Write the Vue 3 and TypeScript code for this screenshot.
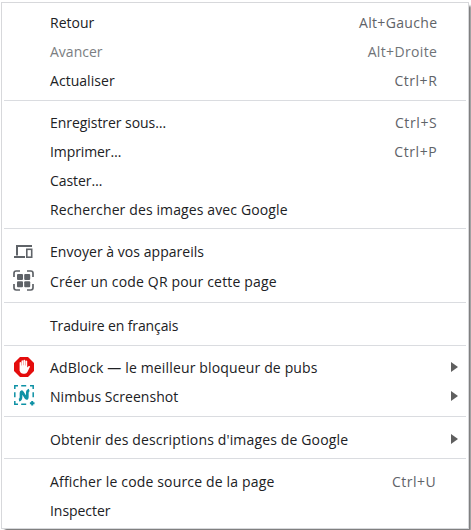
<script setup lang="ts">
interface Item {
  label: string
  spacing: number
  keys?: string
  keysSpacing?: number
  icon?: 'devices' | 'qr' | 'adblock' | 'nimbus'
  disabled?: boolean
  submenu?: boolean
}

const sections: { name: string; items: Item[] }[] = [
  {
    name: 'navigation',
    items: [
      { label: 'Retour', spacing: 0, keys: 'Alt+Gauche', keysSpacing: 0.32 },
      { label: 'Avancer', spacing: 0, keys: 'Alt+Droite', keysSpacing: 0.36, disabled: true },
      { label: 'Actualiser', spacing: 0.04, keys: 'Ctrl+R', keysSpacing: 0.52 },
    ],
  },
  {
    name: 'output',
    items: [
      { label: 'Enregistrer sous…', spacing: -0.05, keys: 'Ctrl+S', keysSpacing: 0.6 },
      { label: 'Imprimer…', spacing: -0.1, keys: 'Ctrl+P', keysSpacing: 0.6 },
      { label: 'Caster…', spacing: -0.05 },
      { label: 'Rechercher des images avec Google', spacing: 0.12 },
    ],
  },
  {
    name: 'share',
    items: [
      { label: 'Envoyer à vos appareils', spacing: 0.04, icon: 'devices' },
      { label: 'Créer un code QR pour cette page', spacing: 0.16, icon: 'qr' },
    ],
  },
  { name: 'translate', items: [{ label: 'Traduire en français', spacing: -0.12 }] },
  {
    name: 'extensions',
    items: [
      { label: 'AdBlock — le meilleur bloqueur de pubs', spacing: 0.15, icon: 'adblock', submenu: true },
      { label: 'Nimbus Screenshot', spacing: 0.04, icon: 'nimbus', submenu: true },
    ],
  },
  {
    name: 'descriptions',
    items: [{ label: "Obtenir des descriptions d'images de Google", spacing: 0.15, submenu: true }],
  },
  {
    name: 'developer',
    items: [
      { label: 'Afficher le code source de la page', spacing: 0.16, keys: 'Ctrl+U', keysSpacing: 0.5 },
      { label: 'Inspecter', spacing: -0.05 },
    ],
  },
]
</script>

<template>
  <div class="screen">
    <div class="menu" role="menu">
      <div v-for="section in sections" :key="section.name" class="section" :class="section.name">
        <div
          v-for="item in section.items"
          :key="item.label"
          class="item"
          :class="{ disabled: item.disabled }"
          role="menuitem"
        >
          <span class="icon">
            <svg v-if="item.icon === 'devices'" width="20" height="16" viewBox="0 0 20 16">
              <path d="M3 11.5V2H18M0 13H11" fill="none" stroke="#5f6368" stroke-width="2" />
              <rect x="12.8" y="5.3" width="4.9" height="7.9" fill="none" stroke="#5f6368" stroke-width="1.6" />
            </svg>
            <svg v-else-if="item.icon === 'qr'" class="qr" width="21" height="21" viewBox="0 0 21 21">
              <path
                d="M1 7V3.2Q1 1 3.2 1H7M14 1h3.8Q20 1 20 3.2V7M20 14v3.8Q20 20 17.8 20H14M7 20H3.2Q1 20 1 17.8V14"
                fill="none" stroke="#5f6368" stroke-width="1.7"
              />
              <g fill="#5f6368">
                <rect x="4" y="4" width="6" height="6" rx="1" />
                <rect x="11.2" y="4" width="6" height="6" rx="1" />
                <rect x="4" y="11.2" width="6" height="6" rx="1" />
                <rect x="11.2" y="11.2" width="6" height="6" rx="1" />
              </g>
            </svg>
            <svg v-else-if="item.icon === 'adblock'" class="adblock" width="20" height="20" viewBox="0 0 20 20">
              <path d="M6 0h8l6 6v8l-6 6H6l-6-6V6z" fill="#e40d0d" />
              <path
                d="M5.6 10V5.4q.8-.9 1.6 0V8.6h.3V3.8q.9-.9 1.7 0V8.2h.3V3.1q.9-.9 1.7 0v5.3h.3V4q.9-.8 1.7 0v6.6l1.2-1.4q1-.6 1.7.3l-2.7 5.6q-.8 1.7-2.6 1.7H9q-2.7-.4-3.4-3z"
                fill="#fff"
              />
            </svg>
            <svg v-else-if="item.icon === 'nimbus'" class="nimbus" width="21" height="21" viewBox="0 0 21 21">
              <path
                d="M.8 4V.8H4M7.2 .8h5M16 .8h3.2V4M.8 7.2v5M19.2 7.2v5M.8 16v3.2H4M7.2 19.2h5"
                fill="none" stroke="#0d91a5" stroke-width="1.5"
              />
              <path d="M5 15.1q2-.4 2-2.8V7.8q.2-2 1.6-.3l3.3 5.4q1.3 1.4 1.4-.7V8q0-2.3 1.9-3" fill="none" stroke="#0d91a5" stroke-width="2.7" />
              <path d="M18.2 15.9v4.6M15.9 18.2h4.6" stroke="#0d91a5" stroke-width="2" />
            </svg>
          </span>
          <span class="label"><span :style="{ letterSpacing: item.spacing + 'px' }">{{ item.label }}</span></span>
          <span v-if="item.keys" class="keys" :style="{ letterSpacing: item.keysSpacing + 'px' }">{{ item.keys }}</span>
          <svg v-if="item.submenu" class="arrow" width="7" height="10" viewBox="0 0 7 10">
            <path d="M0 0L7 5L0 10z" fill="#5f5f5f" />
          </svg>
        </div>
      </div>
    </div>
  </div>
</template>

<style>
body {
  background: #fff;
}
</style>

<style scoped>
.screen {
  box-sizing: border-box;
  width: 471px;
  height: 530px;
  padding: 2px 0 0 1px;
  overflow: hidden;
}
.menu {
  box-sizing: border-box;
  width: 468px;
  height: 527px;
  padding: 0 2px;
  border: 1px solid #d7d8db;
  background: #fff;
  box-shadow: 3px 3px 2px -1px #777;
  font-family: "Open Sans", "Noto Sans", sans-serif;
  font-size: 14px;
  color: #202124;
}
.section {
  padding: 8px 0 5px;
  border-bottom: 1px solid #dadce0;
}
.navigation { padding-top: 5px; }
.output { padding: 7px 0 4px; }
.share { padding: 8px 0 6px; }
.share .item:first-child { margin-bottom: 1px; }
.extensions { padding-top: 7px; }
.descriptions { padding-bottom: 4px; }
.developer { border-bottom: 0; }
.item {
  display: flex;
  align-items: center;
  height: 29px;
  line-height: 29px;
  white-space: nowrap;
}
.icon {
  display: flex;
  width: 46px;
  padding-left: 10px;
  box-sizing: border-box;
  flex: none;
}
.qr { margin: 0 0 2px -1px; }
.adblock { margin-bottom: 1px; }
.nimbus { margin-bottom: 2px; }
.label {
  flex: 1;
}
.keys {
  padding-right: 28.7px;
  color: #5f6368;
}
.developer .keys { padding-right: 29.7px; }
.disabled {
  color: #7b7e82;
}
.disabled .keys {
  color: #6f7377;
}
.arrow { margin: 0 8px 2px 0; }
</style>
